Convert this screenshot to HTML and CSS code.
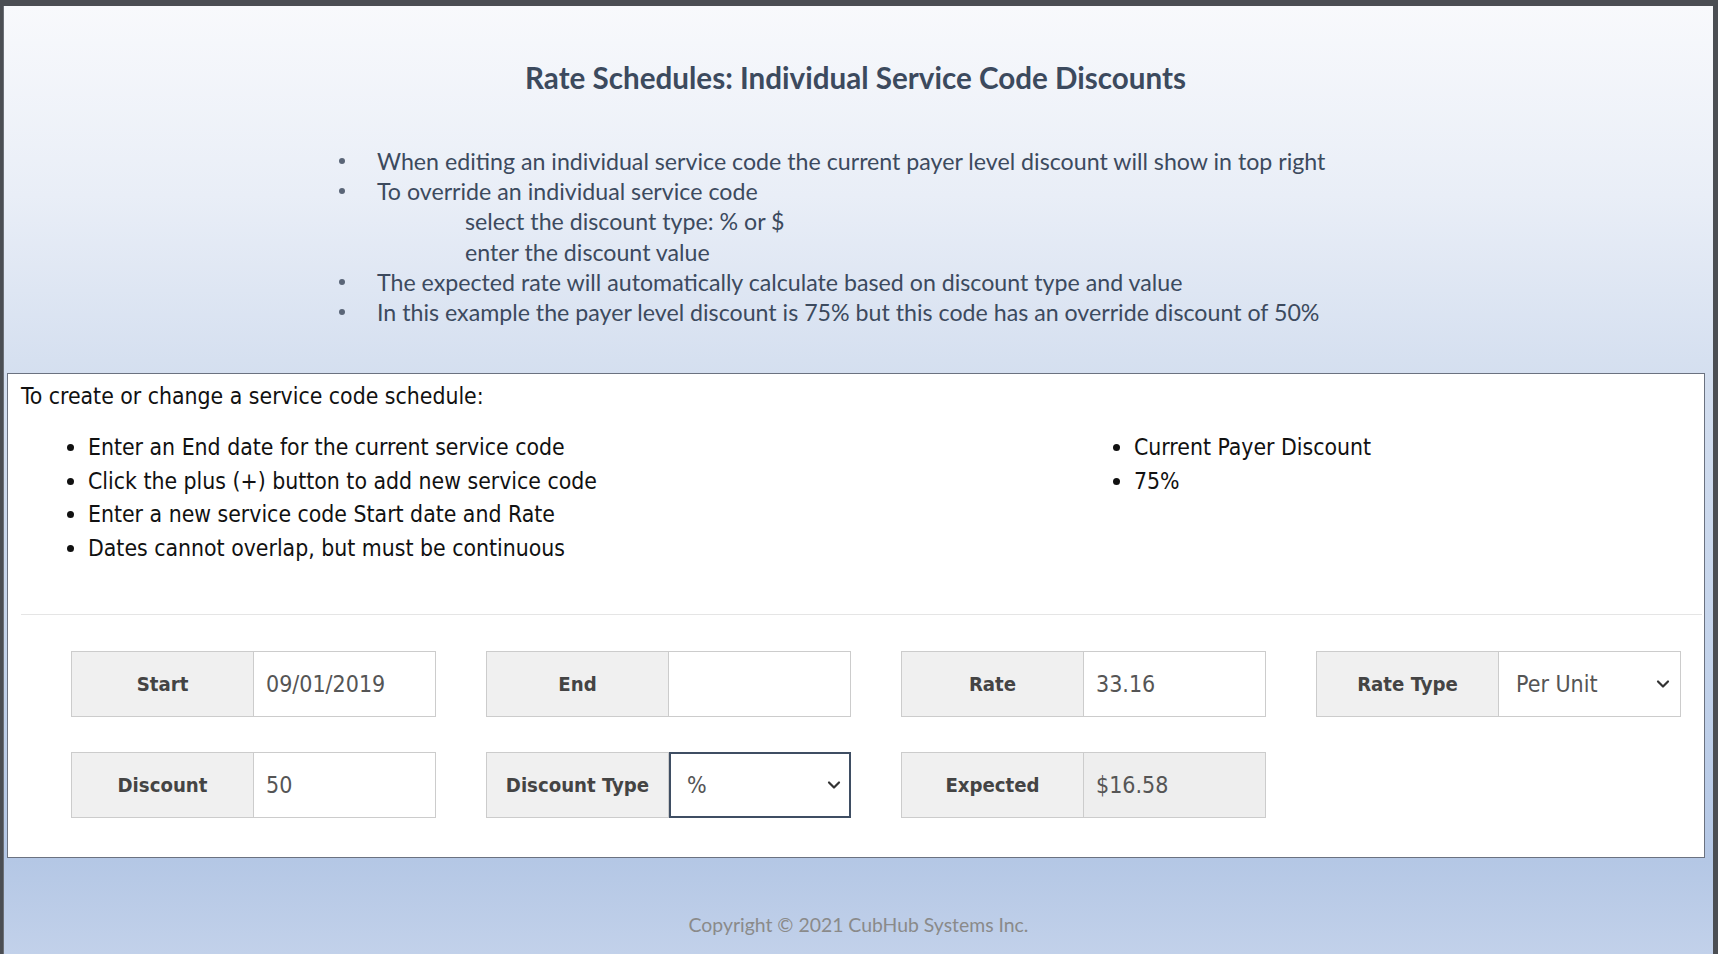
FILE: index.html
```html
<!DOCTYPE html>
<html>
<head>
<meta charset="utf-8">
<link rel="stylesheet" href="styles.css">
</head>
<body>
<div class="frame">
  <header class="intro">
    <h1 class="title">Rate Schedules: Individual Service Code Discounts</h1>
    <ul class="notes">
      <li>When editing an individual service code the current payer level discount will show in top right</li>
      <li>To override an individual service code
        <div class="sub">select the discount type: % or $</div>
        <div class="sub">enter the discount value</div>
      </li>
      <li>The expected rate will automatically calculate based on discount type and value</li>
      <li>In this example the payer level discount is 75% but this code has an override discount of 50%</li>
    </ul>
  </header>

  <section class="panel">
    <div class="panel-top">
      <div class="steps">
        <p class="steps-head">To create or change a service code schedule:</p>
        <ul class="dot-list">
          <li>Enter an End date for the current service code</li>
          <li>Click the plus (+) button to add new service code</li>
          <li>Enter a new service code Start date and Rate</li>
          <li>Dates cannot overlap, but must be continuous</li>
        </ul>
      </div>
      <div class="payer">
        <ul class="dot-list">
          <li>Current Payer Discount</li>
          <li>75%</li>
        </ul>
      </div>
    </div>
    <hr class="sep">
    <div class="form">
      <div class="row">
        <div class="field"><div class="lbl">Start</div><div class="val">09/01/2019</div></div>
        <div class="field"><div class="lbl">End</div><div class="val"></div></div>
        <div class="field"><div class="lbl">Rate</div><div class="val">33.16</div></div>
        <div class="field"><div class="lbl">Rate Type</div><div class="val sel"><span>Per Unit</span><svg class="chev" viewBox="0 0 14 10" width="14" height="10"><path d="M2 2.5 L7 7.5 L12 2.5" fill="none" stroke="#333" stroke-width="2.2" stroke-linecap="round" stroke-linejoin="round"/></svg></div></div>
      </div>
      <div class="row">
        <div class="field"><div class="lbl">Discount</div><div class="val">50</div></div>
        <div class="field"><div class="lbl">Discount Type</div><div class="val sel focus"><span>%</span><svg class="chev" viewBox="0 0 14 10" width="14" height="10"><path d="M2 2.5 L7 7.5 L12 2.5" fill="none" stroke="#333" stroke-width="2.2" stroke-linecap="round" stroke-linejoin="round"/></svg></div></div>
        <div class="field"><div class="lbl">Expected</div><div class="val ro">$16.58</div></div>
      </div>
    </div>
  </section>

  <footer class="foot">Copyright © 2021 CubHub Systems Inc.</footer>
</div>
</body>
</html>
```

FILE: styles.css
```css
html, body {
  margin: 0;
  padding: 0;
  height: 100%;
  background: #4b4e53;
}

.frame {
  box-sizing: border-box;
  margin: 6px 5px 0 3px;
  height: calc(100% - 6px);
  overflow: hidden;
  background: linear-gradient(180deg, #f8f9fc 0%, #e9eef7 20%, #d3deef 40%, #c3d3eb 70%, #b4c7e5 90%, #c2d1ea 100%);
  border-left: 1px solid #6b6f76;
}

.intro {
  padding-top: 57px;
  font-family: "Lato", "Open Sans", sans-serif;
  color: #3c4a5e;
}

.title {
  margin: 0;
  padding-right: 6px;
  text-align: center;
  font-size: 29.6px;
  font-weight: 700;
  line-height: 30px;
}

.notes {
  margin: 53px 0 0 0;
  padding: 0 0 0 373px;
  list-style: none;
  font-size: 23.2px;
  line-height: 30.2px;
}

.notes li {
  position: relative;
}

.notes li::before {
  content: "";
  position: absolute;
  left: -38px;
  top: 12px;
  width: 6px;
  height: 6px;
  border-radius: 50%;
  background: #5a6577;
}

.notes .sub {
  padding-left: 88px;
}

.panel {
  margin: 46px 8px 0 3px;
  background: #ffffff;
  border: 1px solid #6b7280;
  padding: 10px 0 39px 0;
  font-family: "DejaVu Sans Condensed", "DejaVu Sans", sans-serif;
}

.panel-top {
  display: flex;
}

.steps {
  width: 1100px;
  padding-left: 13px;
}

.steps-head {
  margin: 0;
  font-size: 22.8px;
  line-height: 24px;
  color: #111;
}

.dot-list {
  margin: 23px 0 0 0;
  padding: 0 0 0 67px;
  font-size: 22.8px;
  line-height: 33.6px;
  color: #111;
}

.payer .dot-list {
  margin-top: 47px;
  padding-left: 13px;
}

.sep {
  margin: 48px 2px 0 13px;
  border: 0;
  border-top: 1px solid #e5e5e5;
  height: 0;
}

.form {
  padding: 36px 0 0 63px;
  display: flex;
  flex-direction: column;
  gap: 35px;
}

.row {
  display: flex;
  gap: 50px;
}

.field {
  display: flex;
  width: 365px;
  height: 66px;
}

.lbl {
  box-sizing: border-box;
  width: 183px;
  background: #f0f0f0;
  border: 1px solid #cccccc;
  display: flex;
  align-items: center;
  justify-content: center;
  font-weight: 700;
  font-size: 20.2px;
  color: #444;
}

.val {
  box-sizing: border-box;
  flex: 1;
  border: 1px solid #cccccc;
  border-left: 0;
  display: flex;
  align-items: center;
  padding-left: 12px;
  font-size: 23px;
  color: #555;
  background: #fff;
}

.val.ro {
  background: #eeeeee;
}

.val.sel {
  justify-content: space-between;
  padding-right: 10px;
  padding-left: 17px;
}

.val.focus {
  border: 2px solid #3f4e63;
  padding-left: 16px;
  padding-right: 8px;
}

.chev {
  display: block;
}

.foot {
  text-align: center;
  margin-top: 55px;
  font-family: "Lato", "Open Sans", sans-serif;
  font-size: 19.4px;
  color: #8a8a8a;
}
```
